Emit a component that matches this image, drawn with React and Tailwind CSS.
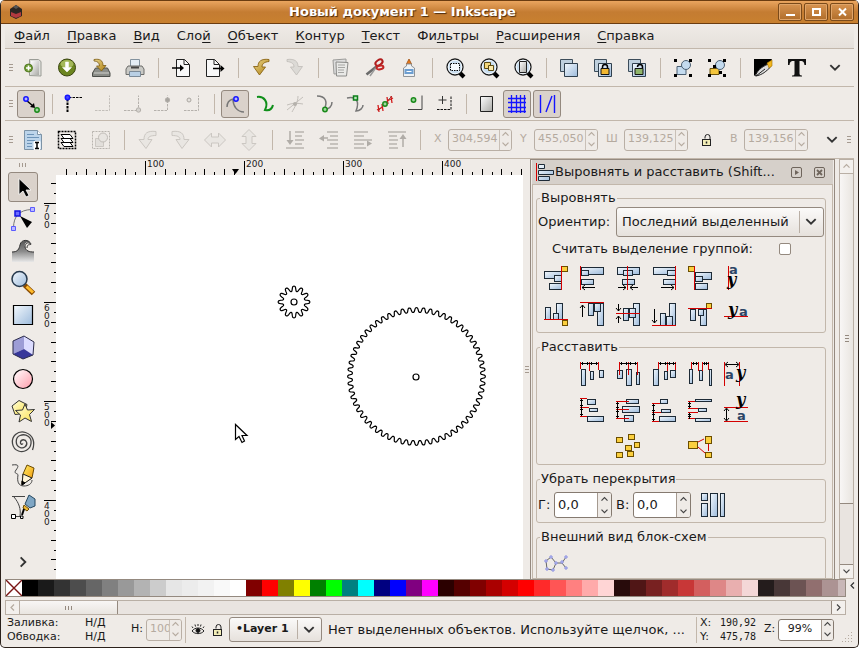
import React, { useState } from "react";

const menus = [
  ["", "Ф", "айл"],
  ["", "П", "равка"],
  ["", "В", "ид"],
  ["Сло", "й", ""],
  ["", "О", "бъект"],
  ["", "К", "онтур"],
  ["", "Т", "екст"],
  ["Фи", "л", "ьтры"],
  ["", "Р", "асширения"],
  ["", "С", "правка"],
];

const palette = [
  "#000000", "#1a1a1a", "#333333", "#4d4d4d", "#666666", "#808080", "#999999",
  "#b3b3b3", "#cccccc", "#e6e6e6", "#ececec", "#f2f2f2", "#f9f9f9", "#ffffff",
  "#800000", "#ff0000", "#808000", "#ffff00", "#008000", "#00ff00", "#008080",
  "#00ffff", "#000080", "#0000ff", "#800080", "#ff00ff", "#2b0000", "#550000",
  "#800000", "#aa0000", "#d40000", "#ff0000", "#ff2a2a", "#ff5555", "#ff8080",
  "#ffaaaa", "#ffd5d5", "#280b0b", "#501616", "#782121", "#a02c2c", "#c83737",
  "#d35f5f", "#de8787", "#e9afaf", "#f4d7d7", "#241c1c", "#483737", "#6c5353",
  "#916f6f", "#ac9393", "#c8b7b7",
];

const Svg = ({ size = 24, children }) => (
  <svg
    width={size}
    height={size}
    viewBox={`0 0 ${size} ${size}`}
    fill="none"
    stroke="#000"
    className="shrink-0"
    aria-hidden="true"
  >
    {children}
  </svg>
);

// Градиенты, общие для всех значков
const Gradients = () => (
  <svg width="0" height="0" className="absolute" aria-hidden="true">
    <defs>
      <linearGradient id="blue" x1="0" y1="0" x2="1" y2="1">
        <stop offset="0" stopColor="#f4f9fd" />
        <stop offset="1" stopColor="#9dbbdc" />
      </linearGradient>
      <linearGradient id="gray" x1="0" y1="0" x2="1" y2="1">
        <stop offset="0" stopColor="#ffffff" />
        <stop offset="1" stopColor="#a9a9a5" />
      </linearGradient>
      <linearGradient id="gold" x1="0" y1="0" x2="1" y2="1">
        <stop offset="0" stopColor="#ecd68a" />
        <stop offset="1" stopColor="#ad7f12" />
      </linearGradient>
      <linearGradient id="orange" x1="0" y1="0" x2="1" y2="1">
        <stop offset="0" stopColor="#fff36a" />
        <stop offset="1" stopColor="#f08c00" />
      </linearGradient>
      <linearGradient id="pink" x1="0" y1="0" x2="1" y2="1">
        <stop offset="0" stopColor="#ffffff" />
        <stop offset="1" stopColor="#ff9cab" />
      </linearGradient>
      <linearGradient id="yellow" x1="0" y1="0" x2="1" y2="1">
        <stop offset="0" stopColor="#ffffe0" />
        <stop offset="1" stopColor="#fbe14b" />
      </linearGradient>
      <linearGradient id="wave" x1="0" y1="0" x2="0" y2="1">
        <stop offset="0" stopColor="#555" />
        <stop offset="0.5" stopColor="#8a8a8a" />
        <stop offset="1" stopColor="#e8e8e8" />
      </linearGradient>
    </defs>
  </svg>
);

const Lens = ({ children }) => (
  <Svg>
    <path d="M17 17l4 4" strokeWidth="4" />
    <circle cx="12" cy="11" r="8" fill="#c9def0" stroke="#1a1a1a" strokeWidth="1.3" />
    <circle cx="12" cy="11" r="6.8" stroke="#fff" strokeWidth="0.8" />
    {children}
  </Svg>
);

const Squares = ({ children }) => (
  <Svg>
    <path d="M3.500 3.500h12v12h-12z" fill="#bfd0de" stroke="#3c4c5a" />
    <path d="M7.500 7.500h13v13h-13z" fill="url(#blue)" stroke="#2f3f4d" />
    {children}
  </Svg>
);

const Corners = () => (
  <path d="M3 3h3v3h-3zM18 3h3v3h-3zM3 18h3v3h-3zM18 18h3v3h-3z" fill="#000" stroke="none" />
);

const Node = ({ x, y, c = "#1a8a1a", f = "#9fd79f" }) => (
  <circle cx={x} cy={y} r="2.2" fill={f} stroke={c} strokeWidth="1.5" />
);

const commandIcons = {
  new: (
    <Svg>
      <path d="M8.500 3.500h9l2.500 2v14.500l-11.500-.5z" fill="#dfe0dc" stroke="#9a9c96" />
      <path d="M10 5h8v14h-8z" fill="url(#gray)" stroke="none" />
      <circle cx="7.500" cy="12" r="4" fill="#6f9b33" stroke="#466d16" strokeWidth="0.8" />
      <path d="M7.500 9.500v5M5 12h5" stroke="#fff" strokeWidth="1.6" />
    </Svg>
  ),
  open: (
    <Svg>
      <circle cx="12" cy="11.500" r="8.500" fill="#6c8520" stroke="#39440f" />
      <ellipse cx="12" cy="8" rx="6.500" ry="4" fill="#a4b85a" stroke="none" />
      <path d="M10.500 6h3v5.500h3l-4.500 4.500-4.500-4.500h3z" fill="#fff" stroke="#fff" strokeWidth="0.5" />
    </Svg>
  ),
  save: (
    <Svg>
      <path d="M6.500 12h12l2.500 5v3.500h-17.500v-3.500z" fill="#8b8d88" stroke="#4c4e4a" />
      <path d="M5 17h15" stroke="#d0d0cc" />
      <path d="M5 3.500c6-1 9 1 9 6h3l-4.500 5.500-5-5h3c0-3-2-5-5.500-5z" fill="url(#gold)" stroke="#7b5a12" strokeWidth="0.8" />
    </Svg>
  ),
  print: (
    <Svg>
      <path d="M7.500 3.500h9v8h-9z" fill="#e4edf5" stroke="#83929e" />
      <path d="M5 10h14l2 3v5.500h-18v-5.500z" fill="#c9c9c5" stroke="#6d6d6a" />
      <path d="M8 10.500h8v2h-8z" fill="#444" stroke="none" />
      <path d="M6.500 15.500h11v5h-11z" fill="#b9cfe4" stroke="#7b8a98" />
    </Svg>
  ),
  import: (
    <Svg>
      <path d="M7.500 3.500h8l5 5v12h-13z" fill="#f8f8f8" stroke="#222" />
      <path d="M15 3.500v5h5" stroke="#222" />
      <path d="M3 12h9" strokeWidth="1.4" />
      <path d="M11 8.500l4 3.500-4 3.500z" fill="#000" stroke="none" />
    </Svg>
  ),
  export: (
    <Svg>
      <path d="M3.500 3.500h8l5 5v12h-13z" fill="#f8f8f8" stroke="#222" />
      <path d="M11 3.500v5h5" stroke="#222" />
      <path d="M10 12.500h9" strokeWidth="1.4" />
      <path d="M17.500 9l4 3.500-4 3.500z" fill="#000" stroke="none" />
    </Svg>
  ),
  undo: (
    <Svg>
      <path d="M20 3.500c-8-1-11 2-11 7h-4.500l6 8.500 6-8h-3.500c0-3 2-5 7-5.500z" fill="url(#gold)" stroke="#8a6414" strokeWidth="0.9" />
    </Svg>
  ),
  redo: (
    <Svg>
      <path d="M4 3.500c8-1 11 2 11 7h4.500l-6 8.500-6-8h3.500c0-3-2-5-7-5.500z" fill="#dcdad6" stroke="#c3c0bb" strokeWidth="0.9" />
    </Svg>
  ),
  copy: (
    <Svg>
      <path d="M4 4l13-1v14l-12 1z" fill="#ddd" stroke="#9b9b99" />
      <path d="M7 6l12 .5-1.500 13.500h-10z" fill="#e9e9e7" stroke="#8b8b89" />
      <path d="M9 9h7M9 11.500h7M9 14h6M9 16.500h6" stroke="#a5a5a3" />
    </Svg>
  ),
  cut: (
    <Svg>
      <path d="M3.500 18.500l10-8" stroke="#6b6b6b" strokeWidth="2.600" />
      <path d="M7 20l6-8.500" stroke="#9a9a9a" strokeWidth="1.500" />
      <ellipse cx="16" cy="6.500" rx="4" ry="2.400" stroke="#b01c1c" strokeWidth="2" transform="rotate(-35 16 6.500)" />
      <ellipse cx="17" cy="11.500" rx="3.500" ry="1.800" stroke="#c22424" strokeWidth="2" transform="rotate(-10 17 11.500)" />
    </Svg>
  ),
  paste: (
    <Svg>
      <path d="M12 3l2.500 5h-5z" fill="#e87a1c" stroke="#9c4c0e" strokeWidth="0.8" />
      <path d="M9.500 8h5v2l3 2v8.500h-11v-8.500l3-2z" fill="#eef2f5" stroke="#909498" />
      <path d="M7.500 13h9v5h-9z" fill="#6d9ed0" stroke="none" />
      <path d="M9.500 15.500h5" stroke="#fff" />
    </Svg>
  ),
  zoomSel: (
    <Lens>
      <path d="M7.500 7.500h9v7h-9z" fill="#f5fafe" strokeDasharray="1.500 1" />
    </Lens>
  ),
  zoomDraw: (
    <Lens>
      <path d="M7.500 6.500h6v6h-6z" fill="#f3d77b" stroke="#5c4a12" />
      <path d="M11.500 9.500h5v5h-5z" fill="#fbe9a8" stroke="#5c4a12" />
    </Lens>
  ),
  zoomPage: (
    <Lens>
      <path d="M8.500 5.500h7v11h-7z" fill="url(#gray)" stroke="#222" />
    </Lens>
  ),
  dup: <Squares />,
  clone: (
    <Squares>
      <path d="M11.500 12.500v-1.500a2.500 2.500 0 015 0v1.500" strokeWidth="1.500" />
      <path d="M10 12.500h8v6h-8z" fill="#f2b731" stroke="#111" />
    </Squares>
  ),
  unclone: (
    <Squares>
      <path d="M12.500 11v0a2.500 2.500 0 015 0v1.500" strokeWidth="1.500" />
      <path d="M10 12.500h8v6h-8z" fill="#8fb56b" stroke="#111" />
    </Squares>
  ),
  group: (
    <Svg>
      <path d="M6 10.500h9v8h-9z" fill="#c4dbef" stroke="#4b5f72" />
      <circle cx="15" cy="9" r="4.500" fill="#c4dbef" stroke="#4b5f72" />
      <Corners />
    </Svg>
  ),
  ungroup: (
    <Svg>
      <path d="M5 12.500h9v6h-9z" fill="#f5c63c" stroke="#6b520c" />
      <circle cx="15" cy="9" r="4.500" fill="#c4dbef" stroke="#4b5f72" />
      <Corners />
      <path d="M8 9h3v3h-3zM14 15h3v3h-3z" fill="#000" stroke="none" />
    </Svg>
  ),
  fill: (
    <Svg>
      <path d="M3 3h18l-1 2-17 15z" fill="#000" stroke="none" />
      <path d="M4.500 20c1-4 5-9 13-12l2 3c-4 4-8 8-15 9z" fill="#ddd" stroke="#222" />
      <path d="M5 20l9-7" stroke="#222" />
      <path d="M16 7l5-3v6l-3 2z" fill="#f4b71f" stroke="#9e6f00" strokeWidth="0.6" />
    </Svg>
  ),
  text: (
    <Svg>
      <path d="M3 3h18v6h-1.500c-.5-3-1-4-4-4h-1v12.500c0 1.500 1 2 2.500 2v1h-10v-1c2 0 2.500-.5 2.500-2v-12.500h-1c-3 0-3.500 1-4 4h-1.500z" fill="#111" stroke="none" />
    </Svg>
  ),
};

const snapIcons = {
  enable: (
    <Svg>
      <path d="M7 8l7 6" strokeWidth="1.500" />
      <path d="M16 16l-5-1 4-4z" fill="#000" stroke="none" />
      <Node x={7} y={7} c="#1414ff" f="#b5b5ff" />
      <Node x={18} y={18} />
    </Svg>
  ),
  bbox: (
    <Svg>
      <path d="M6.500 7v13" strokeWidth="2" strokeDasharray="2.500 1" />
      <path d="M8 5.500h13" strokeDasharray="2.500 1" />
      <Node x={6.500} y={5.500} c="#1414ff" f="#4a4aff" />
    </Svg>
  ),
  edge: (
    <Svg>
      <path d="M4 18.500h14.500v-15" stroke="#c3bfba" strokeDasharray="2.500 1" />
    </Svg>
  ),
  corner: (
    <Svg>
      <path d="M3 18.500h14.500v-15" stroke="#b5b1ac" strokeDasharray="2.500 1" />
      <circle cx="17.500" cy="18" r="2.200" fill="#d5d2ce" stroke="#b5b1ac" />
    </Svg>
  ),
  mid: (
    <Svg>
      <path d="M3 18.500h13.500v-15" stroke="#b5b1ac" strokeDasharray="2.500 1" />
      <circle cx="16.500" cy="8" r="2.200" fill="#a8a5a0" stroke="#b5b1ac" />
    </Svg>
  ),
  center: (
    <Svg>
      <path d="M3 18.500h14.500v-15" stroke="#b5b1ac" strokeDasharray="2.500 1" />
      <circle cx="8" cy="8" r="2" fill="#e5e2de" stroke="#aaa6a1" />
    </Svg>
  ),
  node: (
    <Svg>
      <path d="M4 15c0-4 2-7 6-8M10 7c0 7 4 13 11 13" stroke="#777" strokeWidth="1.500" />
      <Node x={13} y={7} c="#1414ff" f="#b5b5ff" />
    </Svg>
  ),
  path: (
    <Svg>
      <path d="M4 5c7-1 12 5 8 13c4 1 7-1 8-5" stroke="#0f8f1a" strokeWidth="2" />
    </Svg>
  ),
  cross: (
    <Svg>
      <path d="M4 18l16-13M9 20c2-4 6-9 6-16M4 13c5-2 11-2 16-1" stroke="#c3bfba" />
      <circle cx="12" cy="12" r="2" fill="#b5b1ac" stroke="none" />
    </Svg>
  ),
  cusp: (
    <Svg>
      <path d="M4 4c9 0 11 6 7 14c5-1 8-4 8-8" stroke="#777" strokeWidth="1.500" />
      <Node x={12} y={17.500} />
    </Svg>
  ),
  smooth: (
    <Svg>
      <path d="M4 6c9-2 13 3 9 13c4 0 7-3 7-6" stroke="#777" strokeWidth="1.500" />
      <path d="M10.500 4h4v4h-4z" fill="#b8e6b8" stroke="#0c7f1a" strokeWidth="1.500" />
    </Svg>
  ),
  midpoint: (
    <Svg>
      <path d="M5 19l14-15" stroke="#555" />
      <path d="M5 13l1 7M9 12l1 7M14 5l1 7M18 4l1 7M4 18l6-3M14 9l6-3" stroke="#d31a1a" strokeWidth="1.300" />
      <Node x={12} y={12} />
    </Svg>
  ),
  object: (
    <Svg>
      <path d="M5 17.500h14v-14" stroke="#444" />
      <Node x={10.500} y={8} />
    </Svg>
  ),
  rotation: (
    <Svg>
      <path d="M9.500 4v8M5.500 8h8" stroke="#333" />
      <path d="M4 17.500h14v-14" stroke="#111" strokeDasharray="2.500 1" />
    </Svg>
  ),
  page: (
    <Svg>
      <path d="M5.500 4.500h12v15h-12z" fill="url(#gray)" stroke="#222" />
    </Svg>
  ),
  grid: (
    <Svg>
      <path d="M6.500 3v18M11.500 3v18M15.500 3v18M19.500 3v18M3 6.500h18M3 10.500h18M3 15.500h18M3 19.500h18" stroke="#1414ff" strokeWidth="1.300" />
    </Svg>
  ),
  guide: (
    <Svg>
      <path d="M5.500 3v18M19.500 3v18M11 20l6-16" stroke="#1414ff" strokeWidth="1.400" />
    </Svg>
  ),
};

const gl = "#cbc7c2";
const editIcons = {
  select: (
    <Svg>
      <path d="M3.500 2.500h13l4 4v15h-17z" fill="#bcd4ea" stroke="#7d93a6" />
      <path d="M16.500 2.500v4h4" fill="#fff" stroke="#7d93a6" />
      <path d="M6 6.500h7M6 9.500h12M6 12.500h8M6 15.500h5M6 18.500h5" stroke="#6c93b8" />
      <path d="M13 13.500h6v8h-6z" fill="#fff" stroke="#fff" />
      <path d="M14 14.500h4M16 15v5M14 20.500h4" strokeWidth="1.500" />
    </Svg>
  ),
  layers: (
    <Svg>
      <path d="M3.500 3.500h17v17h-17z" strokeWidth="1.500" strokeDasharray="2 1" />
      <path d="M6 14.500h9l3 4h-9zM6 10.500h9l3 4h-9zM6 6.500h9l3 4h-9z" fill="#fff" />
    </Svg>
  ),
  deselect: (
    <Svg>
      <path d="M3.500 3.500h17v17h-17z" stroke="#b8b4af" strokeDasharray="2 1" />
      <path d="M6.500 10.500h8v8h-8z" fill="#e2dfdb" stroke={gl} />
      <circle cx="14" cy="9.500" r="4.500" fill="#e8e5e1" stroke="#c0bcb7" />
    </Svg>
  ),
  rotLeft: (
    <Svg>
      <path d="M21 3.500c-9-1-12 2-12 8h-5l7 9 6-9h-4c0-3 3-4 8-4z" fill="#e9e6e2" stroke={gl} />
    </Svg>
  ),
  rotRight: (
    <Svg>
      <path d="M3 3.500c9-1 12 2 12 8h5l-7 9-6-9h4c0-3-3-4-8-4z" fill="#e9e6e2" stroke={gl} />
    </Svg>
  ),
  flipH: (
    <Svg>
      <path d="M1.500 12l7-7v4h7v-4l7 7-7 7v-4h-7v4z" fill="#e9e6e2" stroke={gl} />
    </Svg>
  ),
  flipV: (
    <Svg>
      <path d="M12 1.500l7 7h-4v7h4l-7 7-7-7h4v-7h-4z" fill="#e9e6e2" stroke={gl} />
    </Svg>
  ),
  bottom: (
    <Svg>
      <path d="M3 20h18M12 4h9M12 8h7M12 12h9M12 16h7" stroke="#c6c2bd" strokeWidth="2" />
      <path d="M7 3v12" stroke="#b0aca7" strokeWidth="1.500" />
      <path d="M3.500 12l3.500 5 3.500-5z" fill="#b0aca7" stroke="none" />
    </Svg>
  ),
  lower: (
    <Svg>
      <path d="M10 4h11M13 8h8M10 12h11M13 16h8M10 20h11" stroke="#c6c2bd" strokeWidth="2" />
      <path d="M5 10h6" stroke="#b0aca7" strokeWidth="1.500" />
      <path d="M7 7l-5 3.500 5 3z" fill="#b0aca7" stroke="none" />
    </Svg>
  ),
  raise: (
    <Svg>
      <path d="M3 4h14M3 8h10M3 12h18M3 16h10M3 20h12" stroke="#c6c2bd" strokeWidth="2" />
      <path d="M16 12.500v6l5-3z" fill="#b0aca7" stroke="none" />
    </Svg>
  ),
  top: (
    <Svg>
      <path d="M3 4h18M4 8h8M4 12h9M4 16h8M4 20h9" stroke="#c6c2bd" strokeWidth="2" />
      <path d="M18 8v11" stroke="#b0aca7" strokeWidth="1.500" />
      <path d="M14.500 11l3.500-5 3.500 5z" fill="#b0aca7" stroke="none" />
    </Svg>
  ),
};

const tools = [
  ["Выделитель", (
    <Svg size={28}>
      <path d="M10 5.500v16l4-3.500 3 6 3-1.500-3-5.500h5z" fill="#000" stroke="#fff" strokeWidth="0.8" />
    </Svg>
  )],
  ["Узлы", (
    <Svg size={28}>
      <path d="M4.500 23c0-12 6-18 18-18.500" stroke="#777" />
      <path d="M2.500 21.500h4v4h-4zM21.500 2.500h4v4h-4z" fill="#b9b9ff" stroke="#5a5aff" />
      <path d="M6 6h5v5h-5z" fill="#6d6dff" stroke="#1414e0" strokeWidth="1.500" />
      <path d="M11 11l12 6-5 6z" fill="#000" stroke="none" />
    </Svg>
  )],
  ["Корректор", (
    <Svg size={28}>
      <path d="M3 15c6 0 7-3 8-7 1-5 9-6 10-2-4-2-6 1-5 4 1 4 4 5 9 5v10h-22z" fill="url(#wave)" stroke="none" />
      <path d="M3 15c6 0 7-3 8-7 1-6 9-6 11-1M22 8c-2-4-6-2-6 2 1 4 4 5 9 5M18 11c0-3 2-4 3-3" stroke="#333" />
    </Svg>
  )],
  ["Масштаб", (
    <Svg size={28}>
      <path d="M15.500 16l9 8.500" stroke="#8a4b00" strokeWidth="5" />
      <path d="M17.500 17.500l6.500 6" stroke="#ffbc2c" strokeWidth="3" />
      <circle cx="10.500" cy="10" r="7.500" fill="url(#blue)" stroke="#26394d" strokeWidth="1.500" />
    </Svg>
  )],
  ["Прямоугольник", (
    <Svg size={28}>
      <path d="M4.500 4.500h19v19h-19z" fill="url(#blue)" strokeWidth="1.200" />
    </Svg>
  )],
  ["Параллелепипед", (
    <Svg size={28}>
      <path d="M4 8l11-5v13l-11 5z" fill="#9d9dd6" stroke="none" />
      <path d="M15 3l10 6-1 13-9-6z" fill="#dcdcff" stroke="none" />
      <path d="M4 21l11-5 9 6-10 4z" fill="#37379a" stroke="none" />
      <path d="M4 8l11-5 10 6-1 13-10 4-10-5z" stroke="#2b2b4a" />
    </Svg>
  )],
  ["Эллипс", (
    <Svg size={28}>
      <circle cx="14" cy="14" r="9.500" fill="url(#pink)" strokeWidth="1.200" />
    </Svg>
  )],
  ["Звезда", (
    <Svg size={28}>
      <path d="M3 9l7-5.500 8 4-2 9-10 1z" fill="url(#yellow)" stroke="#333" />
      <path d="M16 7l2.500 6 7-.5-5 5 2 7-6.500-3.500-6 4 1.500-7-5-4.500 7-.5z" fill="url(#yellow)" stroke="#333" />
    </Svg>
  )],
  ["Спираль", (
    <Svg size={28}>
      <path d="M14 14.500c-1 1.500-3 .5-2.500-1.500.7-3 5-3 6 0 1.500 4-3 7-6.500 5.500-5-2-5-10 0-12 6-2.500 12 2 11 8-.8 6-7 9.500-12.500 7.500-7-2.500-8-12-3-16.500 6-5 15-2 17.500 5 1.200 3.500.8 7-.5 10.500" stroke="#444" strokeWidth="1.300" />
    </Svg>
  )],
  ["Карандаш", (
    <Svg size={28}>
      <path d="M3 4c7-1 7 1 4 5-3 4 2 3 2 5-1 6 0 11 6 11 4 0 8-2 8-6" stroke="#444" />
      <path d="M14 13l4-9 7 3-2 10-10 6z" fill="url(#orange)" stroke="#6b4a00" />
      <path d="M14 13l9 4-10 7z" fill="#fff5d8" stroke="#222" />
      <path d="M13 20l3 2-3 2z" fill="#000" />
    </Svg>
  )],
  ["Перо", (
    <Svg size={28}>
      <path d="M3 3.500h13M5 4c5 6 7 12 6 19M5 23.500h8" stroke="#444" />
      <path d="M2.500 21.500h4v4h-4zM11.500 23h2.500v2.500h-2.500z" fill="#fff" />
      <path d="M16 11l4-9 6 4v7l-5 2z" fill="#7fa6c4" stroke="#24465f" />
      <path d="M15 12l5 4-2 2-4-3z" fill="#f1bb35" stroke="#6b4a00" />
      <path d="M15 16l-2 6" strokeWidth="2" />
    </Svg>
  )],
];

// Значки панели выравнивания: b — голубые бруски, y — жёлтые, r — красные линии, k — стрелки
const alignRows = [
  [
    { b: [[0, 5, 17, 7], [10, 9, 7, 6], [5, 17, 12, 6]], y: [[17, 0, 6, 5]], r: "M17.500 0v24" },
    { b: [[1, 1, 22, 7], [1, 4, 7, 5], [1, 13, 12, 5]], r: "M.5 0v24", k: "M15 21.500h-13M5 19l-3 2.500 3 2.500" },
    { b: [[1, 1, 22, 7], [7, 4, 9, 5], [6, 13, 12, 5]], r: "M11.500 0v24", k: "M2 21.500h8M7 19l3 2.500-3 2.500M22 21.500h-8M17 19l-3 2.500 3 2.500" },
    { b: [[1, 1, 22, 7], [15, 4, 8, 5], [11, 13, 12, 5]], r: "M23.500 0v24", k: "M9 21.500h13M19 19l3 2.500-3 2.500" },
    { b: [[7, 6, 16, 7], [7, 10, 7, 5], [7, 17, 12, 6]], y: [[0, 0, 6, 5]], r: "M6.500 0v24" },
    { r: "M4.500 0v24", t: [["a", 5, 8], ["y", 3, 19]] },
  ],
  [
    { b: [[1, 5, 5, 12], [12, 1, 6, 16], [9, 11, 5, 6]], y: [[18, 18, 5, 5]], r: "M0 17.500h24" },
    { b: [[8, 1, 5, 12], [17, 1, 6, 22], [14, 1, 6, 8]], r: "M0 .5h24", k: "M2.500 15v-12M0 6l2.500-3 2.500 3" },
    { b: [[7, 6, 5, 12], [17, 1, 6, 22], [13, 6, 6, 9]], r: "M0 11.500h24", k: "M2.500 2v7M0 6l2.500 3 2.500-3M2.500 21v-7M0 17l2.500-3 2.500 3" },
    { b: [[8, 11, 5, 12], [17, 1, 6, 22], [14, 14, 6, 9]], r: "M0 23.500h24", k: "M2.500 7v14M0 18l2.500 3 2.500-3" },
    { b: [[2, 7, 5, 11], [12, 7, 6, 16], [10, 7, 5, 6]], y: [[18, 1, 5, 5]], r: "M0 6.500h24" },
    { r: "M0 14.500h24", t: [["y", 4, 13], ["a", 15, 14]] },
  ],
];

const distributeRows = [
  [
    null,
    { b: [[1, 7, 4, 16], [10, 9, 3, 8], [19, 8, 4, 7]], r: "M.5 0v7M9.500 0v9M18.500 0v8", k: "M1 1.500h17M2.500 0v3M7.500 0v3M11.500 0v3M16.500 0v3" },
    { b: [[1, 8, 5, 8], [10, 7, 5, 16], [20, 10, 3, 12]], r: "M3.500 0v13M12.500 0v13M21.500 0v13", k: "M4 1.500h17M5.500 0v3M10.500 0v3M14.500 0v3M19.500 0v3" },
    { b: [[1, 7, 5, 16], [12, 9, 3, 8], [18, 8, 5, 7]], r: "M6.500 0v7M15.500 0v9M23.500 0v8", k: "M7 1.500h17M8.500 0v3M13.500 0v3M17.500 0v3M21.500 0v3" },
    { b: [[1, 7, 3, 14], [11, 8, 3, 10], [21, 7, 2, 16]], r: "M3.500 0v7M10.500 0v9M14.500 0v9M20.500 0v8", k: "M4 1.500h6M15 1.500h6M5.500 0v3M8.500 0v3M16.500 0v3M18.500 0v3" },
    { r: "M.5 0v24M15.500 0v24", k: "M2 2.500h12M4 0l-3 2.500 3 2.500M12 0l3 2.500-3 2.500", t: [["a", 1, 17], ["y", 12, 16]] },
  ],
  [
    null,
    { b: [[7, 1, 8, 5], [9, 10, 8, 3], [7, 18, 16, 5]], r: "M0 .5h7M0 9.500h9M0 18.500h7", k: "M1.500 1v17M0 2.500h3M0 7.500h3M0 11.500h3M0 16.500h3" },
    { b: [[10, 1, 12, 4], [6, 8, 17, 6], [8, 17, 9, 6]], r: "M0 3.500h13M0 11.500h13M0 20.500h13", k: "M1.500 4v16M0 5.500h3M0 9.500h3M0 13.500h3M0 18.500h3" },
    { b: [[8, 1, 7, 4], [9, 11, 9, 3], [7, 18, 16, 5]], r: "M0 5.500h8M0 14.500h9M0 23.500h7", k: "M1.500 6v17M0 7.500h3M0 12.500h3M0 16.500h3M0 21.500h3" },
    { b: [[7, 1, 16, 2], [10, 10, 8, 3], [7, 20, 15, 3]], r: "M0 3.500h7M0 10.500h10M0 14.500h10M0 20.500h7", k: "M1.500 4v6M1.500 15v6M0 5.500h3M0 8.500h3M0 16.500h3M0 18.500h3" },
    { r: "M0 9.500h24M0 23.500h24", k: "M2.500 11v11M0 13l2.500-3 2.500 3M0 20l2.500 3 2.500-3", t: [["y", 12, 7], ["a", 13, 22]] },
  ],
  [
    null,
    null,
    { y: [[0, 3, 6, 5], [12, 0, 6, 5], [18, 8, 5, 5], [9, 11, 6, 5], [0, 18, 6, 5], [11, 17, 6, 5]] },
    null,
    { y: [[0, 7, 9, 7], [17, 2, 6, 7], [17, 18, 6, 5]], r: "M10 8l6-3M10 13l7 6M20.500 10v7" },
  ],
];

const AlignIcon = ({ icon }) => (
  <svg width="24" height="24" viewBox="0 0 24 24" fill="none" className="overflow-visible">
    {(icon.b || []).map(([x, y, w, h], i) => (
      <rect key={i} x={x + 0.5} y={y + 0.5} width={w} height={h} fill="url(#blue)" stroke="#1d2a36" />
    ))}
    {(icon.y || []).map(([x, y, w, h], i) => (
      <rect key={i} x={x + 0.5} y={y + 0.5} width={w} height={h} fill="#fbcf3e" stroke="#6b4e00" />
    ))}
    {icon.r && <path d={icon.r} stroke="#d40000" />}
    {icon.k && <path d={icon.k} stroke="#000" />}
    {(icon.t || []).map(([ch, x, y]) => (
      <text
        key={ch}
        x={x}
        y={y}
        className={
          ch === "a"
            ? "fill-[#2c4566] font-['DejaVu_Sans'] text-[13px] font-bold"
            : "fill-black font-['DejaVu_Serif'] text-[16px] font-bold italic"
        }
      >
        {ch}
      </text>
    ))}
  </svg>
);

const Chevron = ({ dir = "down", className = "", small }) => {
  const d = {
    down: "M2 3.500l4 4 4-4",
    up: "M2 7.500l4-4 4 4",
    left: "M8 2l-4 4 4 4",
    right: "M4 2l4 4-4 4",
  }[dir];
  const s = small ? 9 : 14;
  return (
    <svg width={s} height={s} viewBox="0 0 12 12" fill="none" stroke="currentColor" strokeWidth="1.600" className={className}>
      <path d={d} />
    </svg>
  );
};

const Grip = () => (
  <div className="flex w-[11px] shrink-0 flex-col items-center gap-[2px]">
    <i className="h-px w-1 bg-[#a59a90]" />
    <i className="h-px w-1 bg-[#a59a90]" />
    <i className="h-px w-1 bg-[#a59a90]" />
  </div>
);

const Sep = () => (
  <div className="flex w-3 shrink-0 justify-center">
    <i className="h-5 w-px bg-[#c2b7ab]" />
  </div>
);

const Tool = ({ label, children }) => (
  <button type="button" aria-label={label} className="flex h-7 w-[34px] shrink-0 items-center justify-center">
    {children}
  </button>
);

const Snap = ({ label, on, children }) => {
  const [pressed, setPressed] = useState(!!on);
  return (
    <div className="flex w-[30px] shrink-0 justify-center">
      <button
        type="button"
        aria-label={label}
        aria-pressed={pressed}
        onClick={() => setPressed(!pressed)}
        className={
          "flex h-7 w-7 items-center justify-center rounded-[3px] border " +
          (pressed ? "border-[#94897f] bg-[#dad2cb]" : "border-transparent")
        }
      >
        {children}
      </button>
    </div>
  );
};

const Spin = ({ label, value, disabled, size }) => {
  const [v, setV] = useState(value);
  const sizes = {
    coord: "h-[22px] w-16 text-[11px]",
    small: "h-[22px] w-9 text-[11px]",
    zoom: "h-[22px] w-[56px] text-[11px]",
    big: "h-[26px] w-[58px] text-[13px]",
  };
  return (
    <span
      className={
        "flex shrink-0 overflow-hidden rounded-[3px] border " +
        sizes[size] +
        (disabled
          ? " border-[#b9afa5] bg-[#efebe7] text-[#b5aa9f]"
          : " border-[#857a70] bg-white text-[#1a1a1a]")
      }
    >
      <input
        aria-label={label}
        value={v}
        onChange={(e) => setV(e.target.value)}
        disabled={disabled}
        className={"min-w-0 flex-1 bg-transparent outline-none " + (size === "zoom" ? "text-center" : "pl-[3px]")}
      />
      <span
        className={
          "flex shrink-0 flex-col items-center justify-around border-l bg-[#efebe7] " +
          (size === "big" ? "w-[14px] " : "w-3 ") +
          (disabled ? "border-[#c9c0b7]" : "border-[#a59a90] text-[#444]")
        }
      >
        <button type="button" aria-label="Больше" disabled={disabled}>
          <Chevron dir="up" small />
        </button>
        <button type="button" aria-label="Меньше" disabled={disabled}>
          <Chevron small />
        </button>
      </span>
    </span>
  );
};

const Lock = () => (
  <svg width="14" height="14" viewBox="0 0 14 14" fill="none" stroke="#222">
    <path d="M5 5.500v-1.500a2.500 2.500 0 015 0v3" />
    <rect x="2.500" y="6.500" width="8" height="6" fill="#f3eeb8" />
    <path d="M6.500 8.500v2" strokeWidth="1.500" />
  </svg>
);

const Select = ({ children, className }) => (
  <span className={"relative flex items-center rounded-[3px] border border-[#94897f] bg-linear-to-b from-[#fbfaf9] to-[#e6e1dc] " + className}>
    {children}
    <span className="pointer-events-none absolute right-0 flex h-full w-6 items-center justify-center">
      <i className="absolute left-0 h-4/5 w-px bg-[#b9afa5]" />
      <Chevron className="text-[#333]" />
    </span>
  </span>
);

const ticks = (start, first) => {
  const list = [];
  for (let i = first; i < 60; i++) {
    list.push({ p: Math.round(start + i * 9.9) + 0.5, i });
  }
  return list;
};

const HRuler = () => (
  <svg width="100%" height="15" className="block overflow-hidden" stroke="#000">
    {ticks(101, -8).map(({ p, i }) => (
      <path key={i} d={`M${p} 15v-${i % 10 === 0 ? 14 : i % 2 === 0 ? 6 : 3}`} />
    ))}
    <path d="M188 9h7l-3.500 5z" fill="#000" stroke="none" />
    {[100, 200, 300, 400].map((n, k) => (
      <text key={n} x={103 + k * 99} y="7" className="fill-[#222] stroke-none text-[9px]">
        {n}
      </text>
    ))}
  </svg>
);

const VRuler = () => (
  <svg width="12" height="100%" className="block shrink-0 overflow-hidden" stroke="#000">
    {ticks(28, -2).map(({ p, i }) => (
      <path key={i} d={`M12 ${p}h-${i % 10 === 0 ? 12 : i % 2 === 0 ? 5 : 2}`} />
    ))}
    <path d="M7 247v7l4-3.500z" fill="#000" stroke="none" />
    {["700", "600", "500", "400"].map((n, k) =>
      n.split("").map((c, j) => (
        <text key={n + j} x="0" y={37 + k * 99 + j * 8} className="fill-[#222] stroke-none text-[9px]">
          {c}
        </text>
      ))
    )}
  </svg>
);

// Контур шестерни: n зубьев вокруг центра (cx, cy)
const gear = (cx, cy, n, mid, amp) => {
  const pts = [];
  const steps = n * 16;
  for (let i = 0; i < steps; i++) {
    const a = (i / steps) * Math.PI * 2;
    const r = mid + amp * Math.tanh(1.6 * Math.cos(n * a));
    pts.push(`${(cx + r * Math.sin(a)).toFixed(2)} ${(cy - r * Math.cos(a)).toFixed(2)}`);
  }
  return "M" + pts.join("L") + "Z";
};

const Canvas = () => (
  <div className="relative min-w-0 flex-1 overflow-hidden bg-white">
    <svg width="100%" height="100%" className="absolute inset-0" fill="none" stroke="#000" strokeWidth="1.200">
      <path d={gear(238, 127, 12, 13.3, 2.7)} />
      <circle cx="238" cy="127" r="3" />
      <path d={gear(360.5, 201.5, 60, 66.500, 2.500)} />
      <circle cx="360" cy="202" r="3" />
      <path d="M179.500 249.500v15l3.500-3 3 6 2.500-1.500-2.500-5.500h5z" fill="#fff" />
    </svg>
  </div>
);

const Group = ({ title, children }) => (
  <fieldset className="mx-px min-w-0 rounded-[3px] border border-[#c2b7ab] px-px">
    <legend className="ml-[2px] px-px text-[13px] leading-[18px]">{title}</legend>
    {children}
  </fieldset>
);

const IconRow = ({ row }) => (
  <div className="flex h-9 items-center">
    {row.map((icon, i) =>
      icon ? (
        <button key={i} type="button" aria-label={"Действие " + (i + 1)} className="flex w-9 justify-center">
          <AlignIcon icon={icon} />
        </button>
      ) : (
        <span key={i} className="w-9" />
      )
    )}
  </div>
);

const Dock = () => (
  <aside className="flex w-[305px] shrink-0 flex-col overflow-hidden border-x border-t border-[#94897f] bg-[#efebe7] px-px">
    <div className="flex h-6 shrink-0 items-center bg-[#d6d0ca] pl-1 pr-2">
      <svg width="19" height="18" viewBox="0 0 19 18" className="shrink-0" fill="url(#blue)" stroke="#1d2a36">
        <path d="M2.500 1.500h6v4h-6zM2.500 7.500h15v4h-15zM2.500 13.500h11v4h-11z" />
        <path d="M.5 0v18" stroke="#d40000" />
      </svg>
      <h2 className="min-w-0 flex-1 whitespace-nowrap text-[13px]">Выровнять и расставить (Shift...</h2>
      <button type="button" aria-label="Свернуть" className="mr-3">
        <svg width="11" height="11" viewBox="0 0 11 11" fill="none" stroke="#6f655c">
          <rect x=".5" y=".5" width="10" height="10" rx="1.500" />
          <path d="M4 3v5l4-2.500z" fill="#6f655c" stroke="none" />
        </svg>
      </button>
      <button type="button" aria-label="Закрыть">
        <svg width="11" height="11" viewBox="0 0 11 11" fill="none" stroke="#6f655c">
          <rect x=".5" y=".5" width="10" height="10" rx="1.500" />
          <path d="M3 3l5 5M8 3l-5 5" strokeWidth="1.800" />
        </svg>
      </button>
    </div>
    <div className="flex min-h-0 flex-1 flex-col overflow-hidden border border-[#c2b7ab] px-[2px] pt-1">
      <div className="flex w-full flex-col gap-[5px] pr-[3px]">
        <Group title="Выровнять">
          <div className="flex items-center">
            <label htmlFor="anchor" className="w-[78px] shrink-0 text-[13px]">Ориентир:</label>
            <Select className="h-[30px] flex-1">
              <select id="anchor" className="h-full w-full appearance-none bg-transparent pl-[5px] text-[13px] outline-none">
                <option>Последний выделенный</option>
              </select>
            </Select>
          </div>
          <div className="flex h-[23px] items-center pl-[14px] text-[13px]">
            <label htmlFor="asgroup" className="w-[227px]">Считать выделение группой:</label>
            <input id="asgroup" type="checkbox" className="h-3 w-3 appearance-none rounded-[2px] border border-[#94897f] bg-white checked:bg-[#666]" />
          </div>
          {alignRows.map((row, i) => (
            <IconRow key={i} row={row} />
          ))}
        </Group>
        <Group title="Расставить">
          {distributeRows.map((row, i) => (
            <IconRow key={i} row={row} />
          ))}
        </Group>
        <Group title="Убрать перекрытия">
          <div className="flex h-[34px] items-center text-[13px]">
            <span className="w-4">Г:</span>
            <Spin label="Г" value="0,0" size="big" />
            <span className="ml-1 w-[17px]">В:</span>
            <Spin label="В" value="0,0" size="big" />
            <button type="button" aria-label="Убрать перекрытия" className="ml-[10px]">
              <AlignIcon icon={{ b: [[0, 0, 6, 7], [0, 10, 6, 13], [9, 0, 7, 23], [19, 0, 4, 23]] }} />
            </button>
          </div>
        </Group>
        <Group title="Внешний вид блок-схем">
          <button type="button" aria-label="Блок-схема" className="flex h-9 w-9 items-center justify-center">
            <Svg>
              <path d="M2 9l5-4 5 6-3 7-6-1zM12 11h6l4-6M18 11l4 5" stroke="#666" />
              <g fill="#b5b9ee" stroke="#8a8fe0" strokeWidth="0.8">
                {[[2, 9], [7, 5], [12, 11], [9, 18], [3, 17], [18, 10], [22, 5], [22, 16]].map(([x, y]) => (
                  <circle key={x + "-" + y} cx={x} cy={y} r="1.300" />
                ))}
              </g>
            </Svg>
          </button>
        </Group>
      </div>
    </div>
  </aside>
);

const App = () => {
  const [tool, setTool] = useState(0);

  return (
    <div className="h-screen overflow-hidden bg-white font-['DejaVu_Sans',sans-serif] text-[#1a1a1a]">
      <Gradients />
      <div className="flex h-full flex-col overflow-hidden rounded-t-[5px] rounded-b-[5px] border-x border-b border-[#2b211b] bg-[#efebe7]">
        {/* Заголовок окна */}
        <header className="flex h-6 shrink-0 items-center border-t border-b border-[#6b3c10] bg-linear-to-b from-[#eaa55f] via-[#c47c32] to-[#c8802f] pl-2 pr-1">
          <svg width="14" height="16" viewBox="0 0 14 16">
            <path d="M1 5l6-4 6 4v7l-6 3-6-3z" fill="#2c2622" />
            <path d="M2 8l5 2v4l-5-2zM12 8l-5 2v4l5-2z" fill="#b23a3f" />
            <path d="M4 3l3-2 3 2-3 2z" fill="#555" />
          </svg>
          <h1 className="flex-1 pl-1 text-center text-[13px] font-bold text-white [text-shadow:1px_1px_1px_#4a2a0c]">
            Новый документ 1 — Inkscape
          </h1>
          <div className="flex gap-[2px]">
            {[
              ["Свернуть", "M7 11h9"],
              ["Развернуть", "M8 5h7v6h-7z"],
              ["Закрыть", "M8 4.500l7 7M15 4.500l-7 7"],
            ].map(([name, d]) => (
              <button
                key={name}
                type="button"
                aria-label={name}
                className="h-[18px] w-6 rounded-[2px] border border-[#7a4a1a] bg-linear-to-b from-[#d89450] to-[#b06d2a] shadow-[inset_0_0_0_1px_#e0a468]"
              >
                <svg width="22" height="16" viewBox="0 0 22 16" fill="none" stroke="#fff" strokeWidth="2">
                  <path d={d} />
                </svg>
              </button>
            ))}
          </div>
        </header>

        <nav className="mx-1 flex h-[25px] shrink-0 items-center gap-[17px] whitespace-nowrap border-b border-[#c2b7ab] bg-linear-to-b from-[#efebe7] to-[#e5e0db] pl-[9px] text-[13px]">
          {menus.map(([a, u, b]) => (
            <button key={u + b} type="button">
              {a}
              <span className="underline underline-offset-2">{u}</span>
              {b}
            </button>
          ))}
        </nav>

        {/* Панель команд */}
        <div className="mx-1 flex h-[38px] shrink-0 items-center border-b border-[#c2b7ab]">
          <Grip />
          <Tool label="Создать">{commandIcons.new}</Tool>
          <Tool label="Открыть">{commandIcons.open}</Tool>
          <Tool label="Сохранить">{commandIcons.save}</Tool>
          <Tool label="Печать">{commandIcons.print}</Tool>
          <Sep />
          <Tool label="Импорт">{commandIcons.import}</Tool>
          <Tool label="Экспорт">{commandIcons.export}</Tool>
          <Sep />
          <Tool label="Отменить">{commandIcons.undo}</Tool>
          <Tool label="Повторить">{commandIcons.redo}</Tool>
          <Sep />
          <Tool label="Копировать">{commandIcons.copy}</Tool>
          <Tool label="Вырезать">{commandIcons.cut}</Tool>
          <Tool label="Вставить">{commandIcons.paste}</Tool>
          <Sep />
          <Tool label="Показать выделение">{commandIcons.zoomSel}</Tool>
          <Tool label="Показать рисунок">{commandIcons.zoomDraw}</Tool>
          <Tool label="Показать страницу">{commandIcons.zoomPage}</Tool>
          <Sep />
          <Tool label="Дублировать">{commandIcons.dup}</Tool>
          <Tool label="Клонировать">{commandIcons.clone}</Tool>
          <Tool label="Отсоединить клон">{commandIcons.unclone}</Tool>
          <Sep />
          <Tool label="Сгруппировать">{commandIcons.group}</Tool>
          <Tool label="Разгруппировать">{commandIcons.ungroup}</Tool>
          <Sep />
          <Tool label="Заливка и обводка">{commandIcons.fill}</Tool>
          <Tool label="Текст и шрифт">{commandIcons.text}</Tool>
          <button type="button" aria-label="Ещё команды" className="ml-auto mr-3 text-[#333]">
            <Chevron />
          </button>
        </div>

        {/* Панель прилипания */}
        <div className="mx-1 flex h-[34px] shrink-0 items-center border-b border-[#c2b7ab]">
          <Grip />
          <Snap label="Прилипание" on>{snapIcons.enable}</Snap>
          <Sep />
          <Snap label="Рамки">{snapIcons.bbox}</Snap>
          <Snap label="Края рамок">{snapIcons.edge}</Snap>
          <Snap label="Углы рамок">{snapIcons.corner}</Snap>
          <Snap label="Середины краёв">{snapIcons.mid}</Snap>
          <Snap label="Центры рамок">{snapIcons.center}</Snap>
          <Sep />
          <Snap label="Узлы" on>{snapIcons.node}</Snap>
          <Snap label="Контуры">{snapIcons.path}</Snap>
          <Snap label="Пересечения">{snapIcons.cross}</Snap>
          <Snap label="Острые узлы">{snapIcons.cusp}</Snap>
          <Snap label="Сглаженные узлы">{snapIcons.smooth}</Snap>
          <Snap label="Середины сегментов">{snapIcons.midpoint}</Snap>
          <Snap label="Центры объектов">{snapIcons.object}</Snap>
          <Snap label="Центры вращения">{snapIcons.rotation}</Snap>
          <Sep />
          <Snap label="Край страницы">{snapIcons.page}</Snap>
          <Snap label="Сетка" on>{snapIcons.grid}</Snap>
          <Snap label="Направляющие" on>{snapIcons.guide}</Snap>
        </div>

        {/* Параметры инструмента */}
        <div className="mx-1 flex h-[38px] shrink-0 items-center border-b border-[#c2b7ab] text-[11px] text-[#b5aa9f]">
          <Grip />
          <Tool label="Выделить всё">{editIcons.select}</Tool>
          <Tool label="Выделить во всех слоях">{editIcons.layers}</Tool>
          <Tool label="Снять выделение">{editIcons.deselect}</Tool>
          <Sep />
          <Tool label="Повернуть влево">{editIcons.rotLeft}</Tool>
          <Tool label="Повернуть вправо">{editIcons.rotRight}</Tool>
          <Tool label="Отразить по горизонтали">{editIcons.flipH}</Tool>
          <Tool label="Отразить по вертикали">{editIcons.flipV}</Tool>
          <Sep />
          <Tool label="На задний план">{editIcons.bottom}</Tool>
          <Tool label="Опустить">{editIcons.lower}</Tool>
          <Tool label="Поднять">{editIcons.raise}</Tool>
          <Tool label="На передний план">{editIcons.top}</Tool>
          <Sep />
          <span className="ml-2 w-[14px] shrink-0">X</span>
          <Spin label="X" value="304,594" size="coord" disabled />
          <span className="ml-2 w-[14px] shrink-0">Y</span>
          <Spin label="Y" value="455,050" size="coord" disabled />
          <span className="ml-2 w-[18px] shrink-0">Ш</span>
          <Spin label="Ш" value="139,125" size="coord" disabled />
          <button type="button" aria-label="Сохранять пропорции" className="mx-3 shrink-0">
            <Lock />
          </button>
          <span className="ml-1 w-[14px] shrink-0">В</span>
          <Spin label="В" value="139,156" size="coord" disabled />
          <button type="button" aria-label="Ещё параметры" className="ml-auto mr-1 text-[#333]">
            <Chevron />
          </button>
          <Grip />
        </div>

        {/* Рабочая область */}
        <main className="flex min-h-0 flex-1">
          <div className="flex w-[43px] shrink-0 flex-col items-center">
            <div className="flex h-3 items-center gap-[2px]">
              <i className="h-1 w-px bg-[#a59a90]" />
              <i className="h-1 w-px bg-[#a59a90]" />
              <i className="h-1 w-px bg-[#a59a90]" />
            </div>
            {tools.map(([name, icon], i) => (
              <button
                key={name}
                type="button"
                aria-label={name}
                onClick={() => setTool(i)}
                className={
                  "my-px flex h-[30px] w-[30px] shrink-0 items-center justify-center rounded-[3px] border " +
                  (tool === i ? "border-[#94897f] bg-[#dad2cb]" : "border-transparent")
                }
              >
                {icon}
              </button>
            ))}
            <button type="button" aria-label="Ещё инструменты" className="mb-[10px] mt-auto text-[#333]">
              <Chevron dir="right" />
            </button>
          </div>

          <div className="flex min-w-0 flex-1 flex-col">
            <div className="h-4 shrink-0 pt-px">
              <HRuler />
            </div>
            <div className="flex min-h-0 flex-1">
              <VRuler />
              <Canvas />
            </div>
          </div>

          <div className="flex w-[7px] shrink-0 flex-col items-center justify-center gap-[2px]">
            <i className="h-px w-1 bg-[#a59a90]" />
            <i className="h-px w-1 bg-[#a59a90]" />
            <i className="h-px w-1 bg-[#a59a90]" />
          </div>

          <Dock />

          <div className="mx-1 flex w-[15px] shrink-0 flex-col border border-[#b9afa5] bg-[#e9e4e0]">
            <button type="button" aria-label="Вверх" className="flex h-[14px] shrink-0 items-center justify-center border-b border-[#b9afa5] bg-[#f3f0ed] text-[#b5aa9f]">
              <Chevron dir="up" small />
            </button>
            <div className="flex h-[330px] flex-col items-center justify-center gap-[2px] border-b border-[#94897f] bg-linear-to-r from-[#f8f6f5] to-[#e9e5e0]">
              <i className="h-px w-1 bg-[#94897f]" />
              <i className="h-px w-1 bg-[#94897f]" />
              <i className="h-px w-1 bg-[#94897f]" />
            </div>
            <button type="button" aria-label="Вниз" className="mt-auto flex h-[14px] shrink-0 items-center justify-center border-t border-[#94897f] bg-[#f3f0ed] text-[#444]">
              <Chevron small />
            </button>
          </div>
        </main>

        {/* Палитра */}
        <div className="flex h-[21px] shrink-0 pl-1">
          <div className="flex h-[18px] min-w-0 flex-1 overflow-hidden border border-[#94897f]">
            <button type="button" aria-label="Без заливки" className="h-4 w-4 shrink-0 bg-white">
              <svg width="16" height="16" viewBox="0 0 16 16" stroke="#7a1414" strokeWidth="1.400">
                <path d="M0 0l16 16M16 0l-16 16" />
              </svg>
            </button>
            {palette.map((c, i) => (
              <button key={i} type="button" aria-label={c} className="h-4 w-4 shrink-0" style={{ backgroundColor: c }} />
            ))}
          </div>
          <button type="button" aria-label="Выбор палитры" className="flex h-3 w-3 shrink-0 items-center justify-center text-[#333]">
            <Chevron dir="left" small />
          </button>
        </div>

        <div className="ml-1 mr-3 flex h-[15px] shrink-0 border border-[#b9afa5] bg-[#e9e4e0]">
          <button type="button" aria-label="Влево" className="flex w-[14px] items-center justify-center border-r border-[#b9afa5] bg-[#f3f0ed] text-[#b5aa9f]">
            <Chevron dir="left" small />
          </button>
          <div className="flex w-[98px] items-center justify-center gap-[2px] border-r border-[#94897f] bg-linear-to-b from-[#f8f6f5] to-[#e9e5e0]">
            <i className="h-1 w-px bg-[#94897f]" />
            <i className="h-1 w-px bg-[#94897f]" />
            <i className="h-1 w-px bg-[#94897f]" />
          </div>
          <button type="button" aria-label="Вправо" className="ml-auto flex w-[14px] items-center justify-center border-l border-[#94897f] bg-[#f3f0ed] text-[#444]">
            <Chevron dir="right" small />
          </button>
        </div>

        {/* Строка состояния */}
        <footer className="flex h-8 shrink-0 items-center pb-[3px] pl-[6px] text-[11px]">
          <dl className="grid w-[124px] shrink-0 grid-cols-[78px_1fr] leading-[14px]">
            <dt>Заливка:</dt>
            <dd>Н/Д</dd>
            <dt>Обводка:</dt>
            <dd>Н/Д</dd>
          </dl>
          <span className="w-[15px] shrink-0">Н:</span>
          <Spin label="Непрозрачность" value="100" size="small" disabled />
          <i className="mx-[3px] h-[26px] w-px shrink-0 bg-[#c2b7ab]" />
          <button type="button" aria-label="Видимость слоя" className="ml-[2px] shrink-0">
            <svg width="14" height="14" viewBox="0 0 14 14" fill="none" stroke="#222">
              <path d="M1 8c3-4 9-4 12 0-3 3.500-9 3.500-12 0z" />
              <circle cx="7" cy="7.500" r="2" fill="#111" />
              <path d="M2 5l-1-1.500M4.500 3.500l-.5-2M7 3v-2M9.500 3.500l.5-2M12 5l1-1.500" />
            </svg>
          </button>
          <button type="button" aria-label="Блокировка слоя" className="ml-[6px] shrink-0">
            <Lock />
          </button>
          <Select className="ml-1 h-[25px] w-[93px] shrink-0">
            <select aria-label="Слой" className="h-full w-full appearance-none bg-transparent pl-[6px] text-[11px] font-bold outline-none">
              <option>•Layer 1</option>
            </select>
          </Select>
          <p className="ml-[6px] min-w-0 flex-1 truncate text-[13px]">
            Нет выделенных объектов. Используйте щелчок, ...
          </p>
          <i className="mx-[3px] h-[26px] w-px shrink-0 bg-[#c2b7ab]" />
          <dl className="grid w-[56px] shrink-0 grid-cols-[16px_1fr] leading-[14px]">
            <dt>X:</dt>
            <dd className="text-right font-['DejaVu_Sans_Mono',monospace] text-[10px]">190,92</dd>
            <dt>Y:</dt>
            <dd className="text-right font-['DejaVu_Sans_Mono',monospace] text-[10px]">475,78</dd>
          </dl>
          <span className="ml-2 w-[14px] shrink-0">Z:</span>
          <Spin label="Масштаб" value="99%" size="zoom" />
          <svg width="12" height="12" viewBox="0 0 12 12" className="ml-2 mr-1 shrink-0 self-end" fill="#b5aa9f">
            {[[9, 0], [9, 3], [6, 3], [9, 6], [6, 6], [3, 6], [9, 9], [6, 9], [3, 9], [0, 9]].map(([x, y]) => (
              <rect key={x + "-" + y} x={x} y={y} width="1" height="1" />
            ))}
          </svg>
        </footer>
      </div>
    </div>
  );
};

export default App;
